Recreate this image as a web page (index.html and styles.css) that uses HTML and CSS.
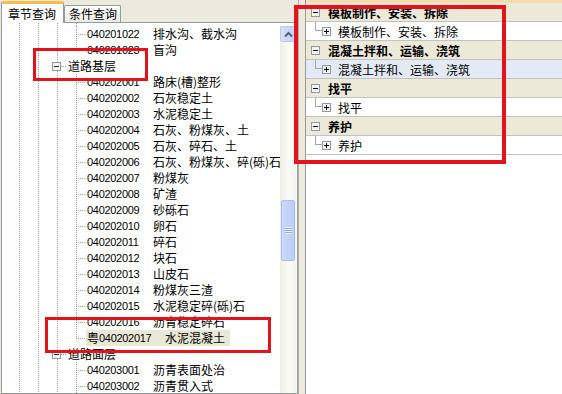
FILE: index.html
```html
<!DOCTYPE html>
<html lang="zh-CN">
<head>
  <meta charset="UTF-8">
  <title>章节查询</title>
  <link rel="stylesheet" href="styles.css">
</head>
<body>

  <div class="window">
    <div class="left">
      <div class="tabs">
        <div class="tab active">章节查询</div>
        <div class="tab">条件查询</div>
      </div>
      <div class="page">
        <div class="tree">
          <div class="row leaf lead"></div>
          <div class="row leaf"><span class="conn"></span><span class="code">040201022</span><span class="name">排水沟、截水沟</span></div>
          <div class="row leaf last"><span class="conn"></span><span class="code">040201023</span><span class="name">盲沟</span></div>
          <div class="row node">
            <svg class="box" width="9" height="9" viewBox="0 0 9 9"><rect x="0.5" y="0.5" width="8" height="8" fill="#f4f3ee" stroke="#8e9ba6"/><path d="M2 4.5h5" stroke="#1b2a4a"/></svg>
            <span class="conn short"></span><span class="label">道路基层</span>
          </div>
          <div class="row leaf"><span class="conn"></span><span class="code">040202001</span><span class="name">路床(槽)整形</span></div>
          <div class="row leaf"><span class="conn"></span><span class="code">040202002</span><span class="name">石灰稳定土</span></div>
          <div class="row leaf"><span class="conn"></span><span class="code">040202003</span><span class="name">水泥稳定土</span></div>
          <div class="row leaf"><span class="conn"></span><span class="code">040202004</span><span class="name">石灰、粉煤灰、土</span></div>
          <div class="row leaf"><span class="conn"></span><span class="code">040202005</span><span class="name">石灰、碎石、土</span></div>
          <div class="row leaf"><span class="conn"></span><span class="code">040202006</span><span class="name">石灰、粉煤灰、碎(砾)石</span></div>
          <div class="row leaf"><span class="conn"></span><span class="code">040202007</span><span class="name">粉煤灰</span></div>
          <div class="row leaf"><span class="conn"></span><span class="code">040202008</span><span class="name">矿渣</span></div>
          <div class="row leaf"><span class="conn"></span><span class="code">040202009</span><span class="name">砂砾石</span></div>
          <div class="row leaf"><span class="conn"></span><span class="code">040202010</span><span class="name">卵石</span></div>
          <div class="row leaf"><span class="conn"></span><span class="code">040202011</span><span class="name">碎石</span></div>
          <div class="row leaf"><span class="conn"></span><span class="code">040202012</span><span class="name">块石</span></div>
          <div class="row leaf"><span class="conn"></span><span class="code">040202013</span><span class="name">山皮石</span></div>
          <div class="row leaf"><span class="conn"></span><span class="code">040202014</span><span class="name">粉煤灰三渣</span></div>
          <div class="row leaf"><span class="conn"></span><span class="code">040202015</span><span class="name">水泥稳定碎(砾)石</span></div>
          <div class="row leaf"><span class="conn"></span><span class="code">040202016</span><span class="name">沥青稳定碎石</span></div>
          <div class="row leaf last"><span class="conn"></span><span class="selected"><span class="han">粤</span><span class="code tight">040202017</span><span class="name">水泥混凝土</span></span></div>
          <div class="row node">
            <svg class="box" width="9" height="9" viewBox="0 0 9 9"><rect x="0.5" y="0.5" width="8" height="8" fill="#f4f3ee" stroke="#8e9ba6"/><path d="M2 4.5h5" stroke="#1b2a4a"/></svg>
            <span class="conn short"></span><span class="label">道路面层</span>
          </div>
          <div class="row leaf"><span class="conn"></span><span class="code">040203001</span><span class="name">沥青表面处治</span></div>
          <div class="row leaf"><span class="conn"></span><span class="code">040203002</span><span class="name">沥青贯入式</span></div>
        </div>
        <div class="vscroll">
          <div class="sb-btn">
            <svg width="15" height="16" viewBox="0 0 15 16"><path d="M4 9.5l3.5-3.5 3.5 3.5" fill="none" stroke="#4d6185" stroke-width="2"/></svg>
          </div>
          <div class="thumb"><span class="grip"></span></div>
        </div>
      </div>
    </div>

    <div class="splitter"></div>

    <div class="right">
      <div class="topline"></div>
      <div class="group">
        <svg class="box" width="9" height="9" viewBox="0 0 9 9"><rect x="0.5" y="0.5" width="8" height="8" fill="#f4f3ee" stroke="#8e9ba6"/><path d="M2 4.5h5" stroke="#000"/></svg>
        <span class="title">模板制作、安装、拆除</span>
      </div>
      <div class="item">
        <span class="elbow"></span>
        <svg class="box" width="9" height="9" viewBox="0 0 9 9"><rect x="0.5" y="0.5" width="8" height="8" fill="#f4f3ee" stroke="#8e9ba6"/><path d="M2 4.5h5M4.5 2v5" stroke="#000"/></svg>
        <span class="text">模板制作、安装、拆除</span>
      </div>
      <div class="group">
        <svg class="box" width="9" height="9" viewBox="0 0 9 9"><rect x="0.5" y="0.5" width="8" height="8" fill="#f4f3ee" stroke="#8e9ba6"/><path d="M2 4.5h5" stroke="#000"/></svg>
        <span class="title">混凝土拌和、运输、浇筑</span>
      </div>
      <div class="item current">
        <span class="elbow"></span>
        <svg class="box" width="9" height="9" viewBox="0 0 9 9"><rect x="0.5" y="0.5" width="8" height="8" fill="#f4f3ee" stroke="#8e9ba6"/><path d="M2 4.5h5M4.5 2v5" stroke="#000"/></svg>
        <span class="text">混凝土拌和、运输、浇筑</span>
      </div>
      <div class="group">
        <svg class="box" width="9" height="9" viewBox="0 0 9 9"><rect x="0.5" y="0.5" width="8" height="8" fill="#f4f3ee" stroke="#8e9ba6"/><path d="M2 4.5h5" stroke="#000"/></svg>
        <span class="title">找平</span>
      </div>
      <div class="item">
        <span class="elbow"></span>
        <svg class="box" width="9" height="9" viewBox="0 0 9 9"><rect x="0.5" y="0.5" width="8" height="8" fill="#f4f3ee" stroke="#8e9ba6"/><path d="M2 4.5h5M4.5 2v5" stroke="#000"/></svg>
        <span class="text">找平</span>
      </div>
      <div class="group">
        <svg class="box" width="9" height="9" viewBox="0 0 9 9"><rect x="0.5" y="0.5" width="8" height="8" fill="#f4f3ee" stroke="#8e9ba6"/><path d="M2 4.5h5" stroke="#000"/></svg>
        <span class="title">养护</span>
      </div>
      <div class="item">
        <span class="elbow"></span>
        <svg class="box" width="9" height="9" viewBox="0 0 9 9"><rect x="0.5" y="0.5" width="8" height="8" fill="#f4f3ee" stroke="#8e9ba6"/><path d="M2 4.5h5M4.5 2v5" stroke="#000"/></svg>
        <span class="text">养护</span>
      </div>
    </div>
  </div>

  <!-- red annotation frames drawn over the screenshot -->
  <div class="mark mark-node"></div>
  <div class="mark mark-leaf"></div>
  <div class="mark mark-list"></div>

</body>
</html>
```

FILE: styles.css
```css
* { margin: 0; padding: 0; box-sizing: border-box; }
body {
  font-family: "Noto Sans CJK SC", sans-serif;
  font-size: 12px;
  color: #000;
  background: #fff;
  width: 562px;
  height: 394px;
  overflow: hidden;
  position: relative;
}
.window {
  display: flex;
  height: 394px;
}

/* left: tab control with tree */
.left {
  width: 298px;
  padding-left: 1px;
  display: flex;
  flex-direction: column;
  background: #eceadf;
}
.tabs {
  height: 22px;
  display: flex;
  align-items: flex-end;
}
.tab {
  height: 17px;
  padding: 0 3px 0 4px;
  line-height: 16px;
  border: 1px solid #919b9c;
  border-bottom: none;
  border-radius: 2px 2px 0 0;
  background: linear-gradient(#fefefe, #ecebe6);
}
.tab.active {
  height: 22px;
  width: 63px;
  padding-left: 6px;
  line-height: 19px;
  margin-bottom: -1px;
  border-top: 3px solid #f6bf4a;
  background: #fcfcfe;
  position: relative;
  z-index: 1;
}
.page {
  flex: 1;
  display: flex;
  border: 1px solid #919b9c;
  background: #fff;
  padding-right: 1px;
  overflow: hidden;
}
.tree {
  width: 278px;
  overflow: hidden;
  white-space: nowrap;
  background-image:
    linear-gradient(#a2a2a2 50%, transparent 50%),
    linear-gradient(#a2a2a2 50%, transparent 50%),
    linear-gradient(#a2a2a2 50%, transparent 50%);
  background-size: 1px 2px;
  background-repeat: repeat-y;
  background-position: 17px 0, 36px 0, 55px 0;
}
.row {
  height: 16px;
  line-height: 16px;
  display: flex;
  align-items: center;
}
.row.lead { height: 3px; }
.leaf {
  padding-left: 74px;
  background-image: linear-gradient(#a2a2a2 50%, transparent 50%);
  background-size: 1px 2px;
  background-repeat: repeat-y;
  background-position: 74px 0;
}
.leaf.last {
  background-image: linear-gradient(transparent 9px, #fff 9px), linear-gradient(#a2a2a2 50%, transparent 50%);
  background-size: 1px 16px, 1px 2px;
  background-repeat: no-repeat, repeat-y;
  background-position: 74px 0, 74px 0;
}
.conn {
  width: 9px;
  height: 1px;
  border-top: 1px dotted #a2a2a2;
  flex-shrink: 0;
}
.conn.short { width: 5px; }
.code {
  font-family: "Liberation Sans", Arial, sans-serif;
  font-size: 11px;
  letter-spacing: -0.3px;
  width: 66px;
  margin-left: 2px;
  flex-shrink: 0;
}
.selected {
  display: flex;
  margin-left: 1px;
  padding: 0 5px 0 1px;
  background: #e9e7d6;
}
.han { width: 12px; }
.code.tight { margin-left: 0; width: 66px; }
.node { padding-left: 50px; }
.node .box { flex-shrink: 0; }
.label { margin-left: 2px; }

/* scrollbar */
.vscroll {
  width: 16px;
  margin-top: 3px;
  background: linear-gradient(to right, #eeede5, #fcfcf9 60%, #f3f1ec);
}
.sb-btn {
  height: 16px;
  border: 1px solid #b9cbf3;
  border-radius: 2px;
  background: linear-gradient(to right, #d6e1fd, #bfd0f8);
}
.sb-btn svg { display: block; }
.thumb {
  height: 61px;
  margin: 158px 1px 0 1px;
  border: 1px solid #a9bff0;
  border-radius: 2px;
  background: linear-gradient(to right, #cad8fc, #bccdf7);
  display: flex;
  align-items: center;
  justify-content: center;
}
.grip {
  width: 7px;
  height: 7px;
  background: repeating-linear-gradient(#eef3fe 0 1px, #8fabe8 1px 2px);
}

/* splitter */
.splitter {
  width: 8px;
  background: #eceadf;
  border-left: 1px solid #b4b2a8;
  border-right: 1px solid #9a9a94;
}

/* right: grouped list */
.right {
  flex: 1;
  background: #fff;
}
.topline {
  height: 3px;
  background: #f3ddb0;
}
.group, .item {
  height: 19px;
  display: flex;
  align-items: center;
  border-bottom: 1px solid #c2c2c2;
  white-space: nowrap;
}
.group {
  padding-left: 5px;
  background: #ece9d8;
}
.title {
  font-weight: bold;
  margin-left: 8px;
}
.item { padding-left: 9px; }
.item.current { background: #e3eaf6; }
.elbow {
  align-self: flex-start;
  width: 7px;
  height: 9px;
  border-left: 1px solid #a6a6a6;
  border-bottom: 1px solid #a6a6a6;
}
.text { margin-left: 7px; }

/* annotation frames */
.mark {
  position: absolute;
  border: 3px solid #e3121b;
}
.mark-node { left: 33px; top: 48px; width: 115px; height: 33px; }
.mark-leaf { left: 45px; top: 317px; width: 226px; height: 36px; }
.mark-list { left: 294px; top: 5px; width: 212px; height: 159px; border-width: 4px; }
```
